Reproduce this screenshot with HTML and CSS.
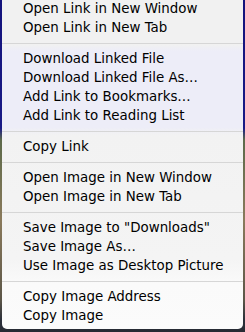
FILE: index.html
```html
<!DOCTYPE html>
<html lang="en">
<head>
    <meta charset="UTF-8">
    <meta name="viewport" content="width=device-width, initial-scale=1.0">
    <title>Context menu</title>
    <link rel="stylesheet" href="styles.css">
</head>
<body>
    <ul class="menu">
        <li class="item">Open Link in New Window</li>
        <li class="item">Open Link in New Tab</li>
        <li class="sep"></li>
        <li class="item">Download Linked File</li>
        <li class="item">Download Linked File As…</li>
        <li class="item">Add Link to Bookmarks…</li>
        <li class="item">Add Link to Reading List</li>
        <li class="sep"></li>
        <li class="item">Copy Link</li>
        <li class="sep"></li>
        <li class="item">Open Image in New Window</li>
        <li class="item">Open Image in New Tab</li>
        <li class="sep"></li>
        <li class="item">Save Image to "Downloads"</li>
        <li class="item">Save Image As…</li>
        <li class="item">Use Image as Desktop Picture</li>
        <li class="sep"></li>
        <li class="item">Copy Image Address</li>
        <li class="item">Copy Image</li>
    </ul>
</body>
</html>
```

FILE: styles.css
```css
html, body {
    height: 100%;
}
body {
    margin: 0;
    padding: 0 2px;
    overflow: hidden;
    font-family: "DejaVu Sans", "Liberation Sans", sans-serif;
    background: linear-gradient(to bottom,
        #14137c 0px, #191a86 128px,
        #5d6a4a 140px, #8a7a5c 220px, #5c5648 300px,
        #2b2f3a 320px, #262a33 332px);
}
.menu {
    list-style: none;
    margin: -1px 0 0;
    padding: 0 0 4px;
    border-radius: 0 0 5px 5px;
    background: linear-gradient(to bottom,
        #f1f1f1 0px, #f1f1f1 46px,
        #ededf8 52px, #ededf8 128px,
        #f2f2f2 136px, #f4f4f4 260px,
        #fafafa 285px, #fbfbfb 330px);
    color: #000;
}
.item {
    height: 19px;
    line-height: 19px;
    padding-left: 21px;
    font-size: 13.4px;
    white-space: nowrap;
}
.sep {
    height: 1px;
    margin: 6px 0 5px;
    background: #d6d6d6;
}
```
